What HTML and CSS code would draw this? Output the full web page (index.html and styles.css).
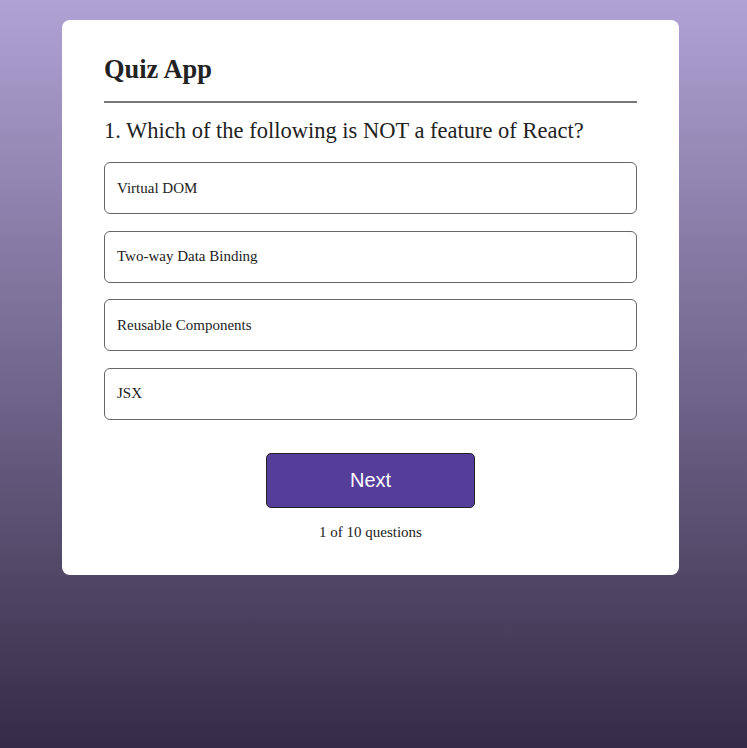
FILE: index.html
```html
<!DOCTYPE html>
<html>
<head>
<meta charset="utf-8">
<link rel="stylesheet" href="styles.css">
</head>
<body>
<div class="card">
  <h1 class="title">Quiz App</h1>
  <hr class="rule">
  <h2 class="question">1. Which of the following is NOT a feature of React?</h2>
  <ul class="options">
    <li class="option">Virtual DOM</li>
    <li class="option">Two-way Data Binding</li>
    <li class="option">Reusable Components</li>
    <li class="option">JSX</li>
  </ul>
  <div class="actions">
    <button class="next">Next</button>
    <div class="progress">1 of 10 questions</div>
  </div>
</div>
</body>
</html>
```
FILE: styles.css
```css
html, body {
  margin: 0;
  padding: 0;
}
body {
  min-height: 748px;
  background: linear-gradient(to bottom, #b0a2d4 0%, #342c46 100%);
  font-family: "Liberation Serif", "Times New Roman", serif;
  color: #222;
  padding-top: 20px;
  box-sizing: border-box;
}
.card {
  width: 617px;
  margin: 0 0 0 62px;
  background: #fff;
  border-radius: 8px;
  padding: 33px 42px 34px;
  box-sizing: border-box;
}
.title {
  margin: 0;
  font-size: 26.4px;
  line-height: 32px;
  font-weight: bold;
}
.rule {
  margin: 16px 0 0;
  border: none;
  border-top: 2px solid #777;
  height: 0;
}
.question {
  margin: 15px 0 0;
  font-size: 22.5px;
  line-height: 26px;
  font-weight: normal;
}
.options {
  list-style: none;
  margin: 18px 0 0;
  padding: 0;
  display: flex;
  flex-direction: column;
  gap: 16.67px;
}
.option {
  height: 52px;
  box-sizing: border-box;
  border: 1px solid #666;
  border-radius: 6px;
  padding: 0 12px;
  display: flex;
  align-items: center;
  font-size: 15px;
}
.actions {
  margin-top: 33px;
  display: flex;
  flex-direction: column;
  align-items: center;
}
.next {
  width: 209px;
  height: 55px;
  background: #553e9a;
  border: 1px solid #222;
  border-radius: 5px;
  color: #fff;
  font-family: "Liberation Sans", Arial, sans-serif;
  font-size: 20px;
  cursor: pointer;
}
.progress {
  margin-top: 16px;
  font-size: 15px;
  line-height: 17px;
}
```
